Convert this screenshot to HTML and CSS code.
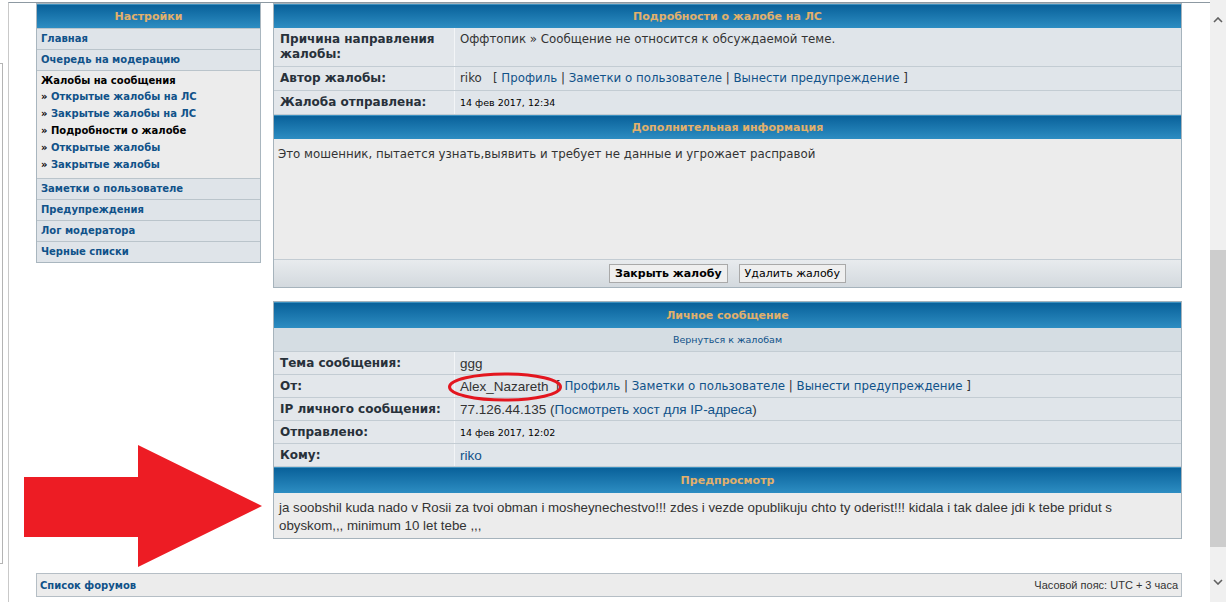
FILE: index.html
```html
<!DOCTYPE html>
<html lang="ru">
<head>
    <meta charset="UTF-8">
    <title>Подробности о жалобе на ЛС</title>
    <link rel="stylesheet" href="styles.css">
</head>
<body>
<div class="screen">
    <div class="behind"></div>

    <div class="page">
        <div class="layout">
            <!-- левое меню модератора -->
            <div class="sidebar">
                <div class="cat-head">Настройки</div>
                <ul class="menu">
                    <li><a href="#">Главная</a></li>
                    <li><a href="#">Очередь на модерацию</a></li>
                    <li class="active">
                        <span class="current">Жалобы на сообщения</span>
                        <ul class="submenu">
                            <li>» <a href="#">Открытые жалобы на ЛС</a></li>
                            <li>» <a href="#">Закрытые жалобы на ЛС</a></li>
                            <li class="here">» Подробности о жалобе</li>
                            <li>» <a href="#">Открытые жалобы</a></li>
                            <li>» <a href="#">Закрытые жалобы</a></li>
                        </ul>
                    </li>
                    <li><a href="#">Заметки о пользователе</a></li>
                    <li><a href="#">Предупреждения</a></li>
                    <li><a href="#">Лог модератора</a></li>
                    <li><a href="#">Черные списки</a></li>
                </ul>
            </div>

            <div class="main">
                <div class="panel">
                    <div class="panel-head">Подробности о жалобе на ЛС</div>
                    <div class="row">
                        <div class="label">Причина направления жалобы:</div>
                        <div class="value">Оффтопик » Сообщение не относится к обсуждаемой теме.</div>
                    </div>
                    <div class="row">
                        <div class="label">Автор жалобы:</div>
                        <div class="value">riko &nbsp; [ <a href="#">Профиль</a> | <a href="#">Заметки о пользователе</a> | <a href="#">Вынести предупреждение</a> ]</div>
                    </div>
                    <div class="row">
                        <div class="label">Жалоба отправлена:</div>
                        <div class="value small">14 фев 2017, 12:34</div>
                    </div>
                    <div class="panel-head">Дополнительная информация</div>
                    <div class="text-box tall">Это мошенник, пытается узнать,выявить и требует не данные и угрожает расправой</div>
                    <div class="buttons">
                        <button class="btn btn-main">Закрыть жалобу</button>
                        <button class="btn">Удалить жалобу</button>
                    </div>
                </div>

                <div class="panel pm">
                    <div class="panel-head">Личное сообщение</div>
                    <div class="sub-head"><a href="#">Вернуться к жалобам</a></div>
                    <div class="row">
                        <div class="label">Тема сообщения:</div>
                        <div class="value"><span class="post">ggg</span></div>
                    </div>
                    <div class="row">
                        <div class="label">От:</div>
                        <div class="value">
                            <span class="post marked">Alex_Nazareth<svg class="ring" width="116" height="32" viewBox="0 0 116 32"><ellipse cx="58" cy="16" rx="55.5" ry="13" fill="none" stroke="#e3161f" stroke-width="3"/></svg></span>
                            &nbsp;[ <a href="#">Профиль</a> | <a href="#">Заметки о пользователе</a> | <a href="#">Вынести предупреждение</a> ]
                        </div>
                    </div>
                    <div class="row">
                        <div class="label">IP личного сообщения:</div>
                        <div class="value"><span class="post">77.126.44.135 (<a href="#">Посмотреть хост для IP-адреса</a>)</span></div>
                    </div>
                    <div class="row">
                        <div class="label">Отправлено:</div>
                        <div class="value small">14 фев 2017, 12:02</div>
                    </div>
                    <div class="row">
                        <div class="label">Кому:</div>
                        <div class="value"><span class="post"><a href="#">riko</a></span></div>
                    </div>
                    <div class="panel-head">Предпросмотр</div>
                    <div class="text-box post preview">ja soobshil kuda nado v Rosii za tvoi obman i mosheynechestvo!!! zdes i vezde opublikuju chto ty oderist!!! kidala i tak dalee jdi k tebe pridut s obyskom,,, minimum 10 let tebe ,,,</div>
                </div>
            </div>
        </div>

        <div class="footer-bar">
            <a href="#">Список форумов</a>
            <span class="tz">Часовой пояс: UTC + 3 часа</span>
        </div>
    </div>

    <div class="scrollbar">
        <div class="sb-btn">
            <svg width="10" height="6" viewBox="0 0 10 6"><path d="M1 5 L5 1 L9 5" fill="none" stroke="#606060" stroke-width="1.6"/></svg>
        </div>
        <div class="sb-track"><div class="sb-thumb"></div></div>
        <div class="sb-btn">
            <svg width="10" height="6" viewBox="0 0 10 6"><path d="M1 1 L5 5 L9 1" fill="none" stroke="#606060" stroke-width="1.6"/></svg>
        </div>
    </div>

    <!-- красная стрелка-пометка -->
    <svg class="arrow" width="270" height="130" viewBox="0 0 270 130">
        <polygon points="24,37 138,37 138,5 262,66 138,127 138,97 24,97" fill="#ed1c24"/>
    </svg>
</div>
</body>
</html>
```

FILE: styles.css
```css
body {
    margin: 0;
    background: #fff;
    font-family: "DejaVu Sans", Verdana, sans-serif;
    color: #333;
    overflow: hidden;
}
a {
    color: #105289;
    text-decoration: none;
}
.screen {
    display: flex;
    height: 602px;
    position: relative;
}
.behind {
    position: absolute;
    left: 0;
    top: 63px;
    width: 2px;
    height: 499px;
    border: 1px solid #b4b4b4;
    border-left: none;
}
.page {
    width: 1146px;
    margin: 2px 0 0 8px;
    padding: 0 28px 0 27px;
    border-top: 1px solid #8d99a2;
    border-left: 1px solid #c9c9c9;
}
.layout {
    display: flex;
    align-items: flex-start;
    gap: 12px;
}

/* sidebar */
.sidebar {
    width: 223px;
    border: 1px solid #a9b6bf;
    background: #dfe4e9;
}
.cat-head,
.panel-head {
    height: 24px;
    line-height: 24px;
    text-align: center;
    font-size: 11px;
    font-weight: bold;
    color: #e2b06b;
    background: linear-gradient(#09619a, #2d8dc2);
    border-top: 1px solid #3a8fbf;
    box-sizing: border-box;
}
.pm .panel-head {
    height: 26px;
    line-height: 26px;
}
.menu,
.submenu {
    list-style: none;
    margin: 0;
    padding: 0;
}
.menu > li {
    padding: 4px;
    line-height: 12px;
    font-size: 10px;
    font-weight: bold;
    border-top: 1px solid #bac4cb;
}
.menu > li.active {
    background: #ececec;
    padding: 3px 4px 5px;
}
.current {
    display: block;
    line-height: 14px;
    color: #000;
}
.submenu li {
    line-height: 17px;
    color: #000;
}

/* main column */
.main {
    width: 909px;
}
.panel {
    border: 1px solid #a6b3bc;
    background: #e0e5ea;
}
.panel + .panel {
    margin-top: 13px;
}
.row {
    display: grid;
    grid-template-columns: 181px 1fr;
    border-bottom: 1px solid #c3ccd3;
}
.label {
    padding: 4px 6px;
    line-height: 15px;
    font-size: 12px;
    font-weight: bold;
    color: #28313a;
    border-right: 1px solid #f3f5f7;
    background: #e3e7eb;
}
.value {
    padding: 4px 5px;
    line-height: 15px;
    font-size: 11.8px;
}
.pm .label,
.pm .value {
    padding-bottom: 3px;
}
.value.small {
    font-size: 9.5px;
    color: #000;
}
.post {
    font-family: "Liberation Sans", Arial, sans-serif;
    font-size: 13.5px;
    vertical-align: top;
}
.marked {
    position: relative;
}
.ring {
    position: absolute;
    left: -13px;
    top: -8px;
}
.text-box {
    background: #ececec;
    padding: 8px 4px;
    line-height: 15px;
    font-size: 11.8px;
}
.text-box.tall {
    height: 104px;
}
.text-box.preview {
    padding: 6px 5px 3px;
    line-height: 18px;
    font-size: 13.3px;
}
.sub-head {
    text-align: center;
    height: 23px;
    line-height: 23px;
    font-size: 9.5px;
    background: #d5dde3;
    border-bottom: 1px solid #c3ccd3;
}
.buttons {
    height: 28px;
    display: flex;
    align-items: center;
    justify-content: center;
    gap: 11px;
    background: linear-gradient(#e8ebee, #d3d9de);
    border-top: 1px solid #c3ccd3;
    box-sizing: border-box;
}
.btn {
    height: 19px;
    padding: 0 5px;
    font-family: "DejaVu Sans", Verdana, sans-serif;
    font-size: 11px;
    color: #000;
    background: #efefef;
    border: 1px solid #a9a9a9;
}
.btn-main {
    font-weight: bold;
}

/* footer */
.footer-bar {
    margin-top: 34px;
    height: 22px;
    display: flex;
    align-items: center;
    justify-content: space-between;
    padding: 0 3px;
    background: #ececec;
    border: 1px solid #b5bec5;
}
.footer-bar a {
    font-size: 10px;
    font-weight: bold;
}
.tz {
    font-family: "Liberation Sans", Arial, sans-serif;
    font-size: 11px;
}

/* scrollbar */
.scrollbar {
    width: 16px;
    display: flex;
    flex-direction: column;
    background: #f0f0f0;
}
.sb-btn {
    height: 40px;
    display: flex;
    align-items: center;
    justify-content: center;
}
.sb-track {
    flex: 1;
    padding-top: 210px;
}
.sb-thumb {
    height: 297px;
    background: #cdcdcd;
}

/* annotation */
.arrow {
    position: absolute;
    left: 0;
    top: 440px;
}
```
